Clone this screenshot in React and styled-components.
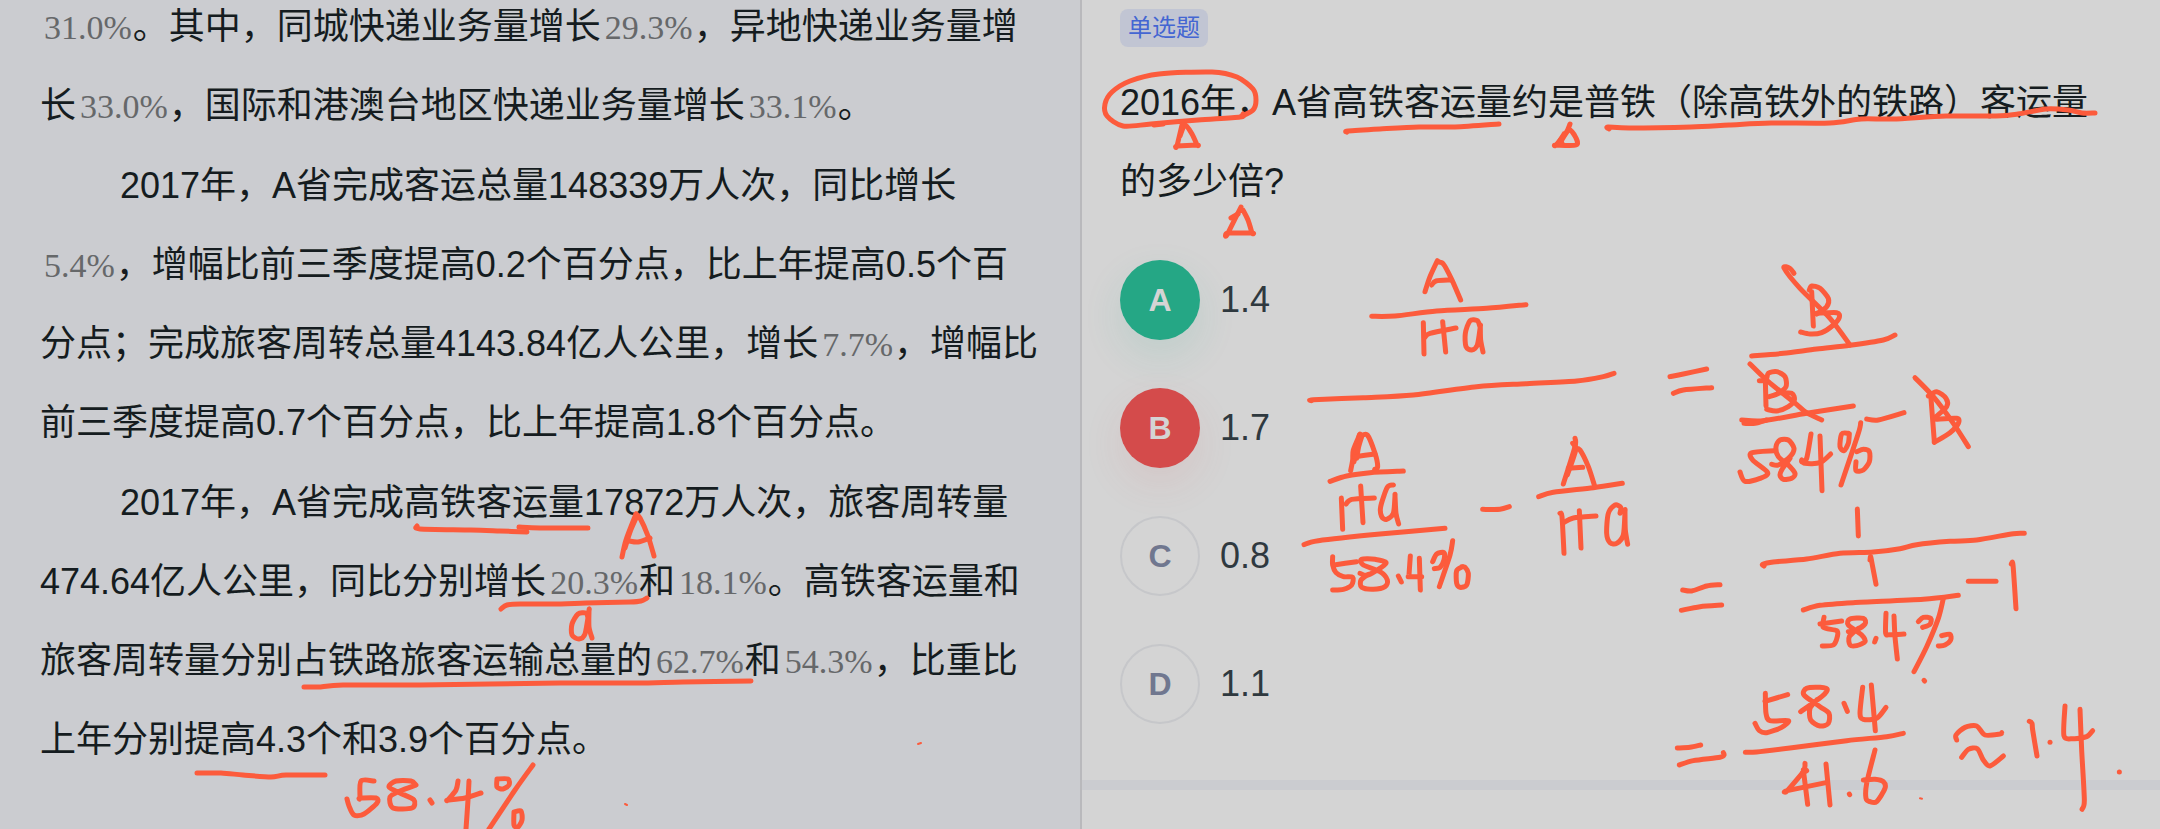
import React from 'react';
import styled, { createGlobalStyle, css } from 'styled-components';

const GlobalStyle = createGlobalStyle`
  *, *::before, *::after { box-sizing: border-box; }
  body {
    margin: 0;
    background: #cbccd0;
    color: #151c20;
    font-family: "Liberation Sans", "Noto Sans CJK SC", sans-serif;
  }
`;

const Page = styled.div`
  display: grid;
  grid-template-columns: 1fr 1fr;
  min-height: 100vh;
  overflow: hidden;
`;

const Passage = styled.article`
  position: relative;
  display: flex;
  flex-direction: column;
  gap: 1px;
  padding: 0 40px 36px;
  overflow: hidden;
  background: #cbccd0;
`;

const bodyText = css`
  margin: 0;
  font-size: 36px;
  line-height: 79px;
`;

const Paragraph = styled.p`
  ${bodyText}
  text-indent: ${({ $continued }) => ($continued ? '0' : '80px')};
  margin-top: ${({ $continued }) => ($continued ? '-13px' : '0')};
`;

const Formula = styled.span`
  padding: 0 1px 0 4px;
  font-family: "Liberation Serif", serif;
  font-size: 34px;
  line-height: 36px;
  color: #66686a;
`;

const Panel = styled.main`
  position: relative;
  overflow: hidden;
  background: #d4d4d4;
  border-left: 2px solid #b9b9bc;
`;

const Question = styled.section`
  padding: 9px 38px 56px;
  border-bottom: 10px solid #cbccd0;
`;

const Tag = styled.span`
  display: inline-block;
  padding: 0 8px;
  border-radius: 8px;
  background: #c1c5d3;
  color: #4466d2;
  font-size: 24px;
  line-height: 38px;
`;

const Stem = styled.h1`
  ${bodyText}
  margin-top: 16px;
  font-weight: 400;
`;

const Options = styled.fieldset`
  display: flex;
  flex-direction: column;
  gap: 48px;
  margin: 39px 0 0;
  padding: 0;
  border: 0;
`;

const Option = styled.label`
  display: flex;
  align-items: center;
  gap: 20px;
  color: #2f393f;
  font-size: 36px;
  line-height: 80px;
  cursor: pointer;
`;

const HiddenRadio = styled.input`
  position: absolute;
  width: 1px;
  height: 1px;
  margin: 0;
  opacity: 0;
`;

const marks = {
  right: css`
    background: #25a785;
    color: #d4d4d4;
    box-shadow: 0 16px 40px rgba(37, 167, 133, 0.12);
  `,
  wrong: css`
    background: #d44b4b;
    color: #d4d4d4;
    box-shadow: 0 16px 40px rgba(212, 75, 75, 0.1);
  `,
  plain: css`
    border: 2px solid #c6c7ca;
    color: #70778f;
  `,
};

const Letter = styled.span`
  display: flex;
  align-items: center;
  justify-content: center;
  width: 80px;
  height: 80px;
  border-radius: 50%;
  font-size: 32px;
  font-weight: 700;
  line-height: 36px;
  ${({ $mark }) => marks[$mark]}
`;

const Value = styled.span`
  line-height: 80px;
`;

const Ink = styled.svg`
  position: absolute;
  top: 0;
  left: ${({ $left }) => $left}px;
  width: 1080px;
  height: 829px;
  pointer-events: none;
  fill: none;
  stroke: #fc5b3c;
  stroke-linecap: round;
  stroke-linejoin: round;
`;

/* Turns a list of pen positions into a smooth curve through all of them. */
function curve(text) {
  const p = text.split(' ').map((pair) => pair.split(',').map(Number));
  let d = `M${p[0]}`;
  if (p.length === 1) return `${d}l0.1,0`;
  for (let i = 0; i < p.length - 1; i += 1) {
    const a = p[i - 1] || p[i];
    const b = p[i];
    const c = p[i + 1];
    const e = p[i + 2] || c;
    const k = 7;
    d += `C${b[0] + (c[0] - a[0]) / k},${b[1] + (c[1] - a[1]) / k} `;
    d += `${c[0] - (e[0] - b[0]) / k},${c[1] - (e[1] - b[1]) / k} ${c}`;
  }
  return d;
}

function Strokes({ x = 0, y = 0, scale = 1, width = 5, lines }) {
  return (
    <g transform={`translate(${x} ${y}) scale(${scale})`} strokeWidth={width / scale}>
      {lines.map((line) => (
        <path key={line} d={curve(line)} />
      ))}
    </g>
  );
}

const passageInk = [
  '417,526 420,529 471,530 500,531 527,532',
  '519,527 540,528 588,528',
  '622,557 626,540 636,514', '625,548 630,532 637,516',
  '636,514 640,518 648,536 654,556',
  '629,541 638,542 650,538',
  '501,609 507,605 520,604 561,604 586,603 630,602 641,601 647,598',
  '588,618 586,613 578,614 572,624 572,635 579,639 585,634 589,611 589,611 589,627 592,638',
  '304,687 318,687 343,685 420,685 560,683 636,683 683,682 751,681',
  '197,773 221,773 243,775 271,777 286,775 325,775',
  '374,781 361,781 360,798 360,798 376,798 377,803 364,814 354,815 349,806 347,799',
  '416,785 411,781 396,781 389,787 400,793 414,800 412,808 393,808 390,797 400,791 416,785',
  '430,800 432,803',
  '458,781 456,790 448,800 448,800 465,798 481,793', '469,781 468,800 466,829',
  '497,779 508,779 509,785 503,789 497,787 497,779', '533,765 515,790 489,829',
  '514,812 521,811 522,820 518,827 514,825 514,812',
];

const questionInk = [
  '1243,114 1240,117 1198,120 1151,124 1123,126 1107,116 1105,104 1112,92 1130,81 1159,74 1212,72 1237,77 1253,89 1256,100 1253,110 1240,117',
  '1154,125 1163,124',
  '1182,125 1177,146 1177,146 1197,145 1197,145 1192,134 1185,125 1180,136',
  '1347,132 1348,131 1380,129 1419,127 1455,127 1499,124',
  '1570,124 1566,133 1556,145 1556,145 1576,145 1576,138 1569,130 1560,143',
  '1564,134 1558,144 1562,143',
  '1609,129 1608,127 1629,128 1691,127 1729,125 1771,123 1830,123 1861,119 1893,119 1946,116 1996,116 2018,114 2046,109 2068,110 2082,113 2095,113',
  '1241,207 1227,235 1228,233 1252,233 1252,233 1248,220 1243,210',
  '1231,218 1238,214',
];

const divisionInk = [
  '435,185 450,140 472,92', '472,96 490,102 515,148 542,210', '455,165 468,153 512,150',
  '275,259 345,258 470,243 620,235 738,224',
  '430,278 432,372', '435,322 450,310 528,294', '488,275 497,366',
  '600,290 592,272 570,272 556,310 558,350 575,360 592,345 601,290 601,290 602,330 609,366',
  '95,512 100,509 250,503 400,495 590,470 740,461 890,453 970,440 1002,430',
  '240,612 220,660 218,690 212,722', '238,615 228,665 222,695', '245,620 236,650 230,685',
  '240,620 262,615 285,670 293,710 284,718', '225,680 285,672',
  '150,754 200,738 270,728 370,723',
  '184,804 188,898', '198,822 215,808 283,804', '242,768 249,878',
  '340,765 322,772 302,830 305,860 320,868 340,850 345,798 345,798 348,850 356,882',
  '72,944 115,932 300,912 495,895',
  '158,980 158,1005 168,1028 190,1040 218,1042 215,1065 190,1078 158,1080', '162,1005 230,995',
  '240,1030 265,1035 318,1000 285,988 245,988 250,1005 300,1025 322,1050 315,1070 280,1078 245,1072 243,1050 265,1033',
  '355,1038 364,1056', '391,978 387,1035 387,1040 425,1040', '418,985 421,1080',
  '458,995 470,972 492,968 492,990 480,1012 463,1016', '518,932 510,975 478,1070',
  '548,1010 530,1022 530,1060 540,1072 560,1065 565,1030 555,1012 545,1010',
  '608,838 660,838 688,830',
  '885,625 885,650 850,762', '878,640 887,660 862,735', '885,655 900,660 925,710 943,765', '865,715 908,712',
  '776,800 820,787 940,773 1027,760',
  '840,850 846,860 852,970', '850,878 880,864 948,858', '898,842 903,954',
  '1020,850 1022,832 1005,825 985,850 980,910 990,938 1010,940 1030,915 1035,845 1035,845 1036,900 1043,943',
];

const ratioInk = [
  '462,130 450,115 432,114 480,175 570,265 630,345',
  '515,185 520,288', '508,180 515,168 540,175 565,205 560,230 530,252',
  '530,250 590,248 598,262 580,285 545,308 510,312 482,306',
  '335,378 430,370 530,357 630,346 730,330 765,315',
  '90,440 130,432 200,417', '100,490 130,480 215,473',
  '330,402 385,455 460,515 500,548 545,570', '376,450 378,528',
  '358,452 378,450 385,430 410,425 435,440 438,470 415,490 388,500',
  '415,488 455,490 463,510 445,530 410,543 380,538',
  '305,570 370,572 500,550 640,528', '312,580 345,580 380,570',
  '402,662 335,668 338,690 383,728 360,745 315,754 300,726',
  '395,703 415,705 450,680 462,655 445,630 420,630 408,650 415,680 445,705 465,730 455,745 430,748 420,735 428,715 450,685',
  '513,612 500,685 485,695', '485,690 495,700 540,698 572,672', '540,618 546,782',
  '625,610 605,612 600,650 612,662 625,640 628,612', '662,578 655,610 603,765',
  '650,665 670,658 688,665 688,695 670,720 648,722 648,695',
  '680,567 715,570 792,548',
  '825,443 880,500 940,580 985,650', '872,492 883,635',
  '865,498 890,485 918,505 920,530 888,560', '888,568 950,565 955,580 930,608 883,637',
];

const resultInk = [
  '652,57 655,138',
  '372,228 368,223 400,216 500,207 600,190 700,186 780,176 830,164 930,154 1010,150 1120,131 1153,130',
  '690,210 692,200 697,225 708,283',
  '128,300 155,303 200,288 240,284', '124,361 180,350 245,345',
  '490,360 540,346 640,338 850,328 955,316',
  '985,274 1068,274', '1114,222 1119,225 1128,356',
  '540,402 605,393', '552,382 550,412 590,422 592,440 580,465 547,468',
  '625,425 645,422 675,402 670,385 630,387 625,405 665,435 675,455 650,467 630,465 628,440 655,415',
  '708,445 704,456', '738,370 737,430 750,434 792,432', '762,378 765,440 772,507',
  '835,395 850,382 872,385 870,403 848,412', '910,325 895,385 860,470 822,545',
  '905,437 930,433 932,450 915,465 895,468', '852,571 854,573',
  '443,614 375,634', '376,610 378,670 390,692 445,692 425,712 380,728 358,722 345,700',
  '482,665 545,620 562,598 540,592 500,595 492,615 540,650 567,670 565,700 540,708 512,690 510,655 530,630',
  '612,640 622,664', '668,592 660,670 670,688 710,685 738,652', '694,585 706,722',
  '316,787 350,786 450,774 620,752 740,740 790,730',
  '112,774 150,772 182,765', '118,825 160,812 240,802 252,795 250,788',
  '495,820 490,845 442,902 442,902 558,878', '490,840 503,943', '500,842 488,848', '558,822 570,945', '628,912 629,914',
  '705,780 680,880 678,925 690,935 710,935 735,895 730,875 705,868 670,870',
  '950,750 948,735 975,712 1010,708 1035,735 1080,732 1085,728',
  '965,802 985,778 1012,776 1030,810 1050,828 1090,798',
  '1168,694 1176,700 1178,720 1191,798', '1230,757',
  '1275,648 1272,738 1300,746 1340,740 1358,722', '1320,658 1325,780 1333,930 1326,958',
  '1438,846',
];

const options = [
  { letter: 'A', value: '1.4', mark: 'right' },
  { letter: 'B', value: '1.7', mark: 'wrong' },
  { letter: 'C', value: '0.8', mark: 'plain' },
  { letter: 'D', value: '1.1', mark: 'plain' },
];

export default function App() {
  return (
    <Page lang="zh-CN">
      <GlobalStyle />
      <Passage>
        <Paragraph $continued>
          <Formula>31.0%</Formula>。其中，同城快递业务量增长<Formula>29.3%</Formula>，异地快递业务量增长
          <Formula>33.0%</Formula>，国际和港澳台地区快递业务量增长<Formula>33.1%</Formula>。
        </Paragraph>
        <Paragraph>
          2017年，A省完成客运总量148339万人次，同比增长<Formula>5.4%</Formula>
          ，增幅比前三季度提高0.2个百分点，比上年提高0.5个百分点；完成旅客周转总量4143.84亿人公里，增长
          <Formula>7.7%</Formula>，增幅比前三季度提高0.7个百分点，比上年提高1.8个百分点。
        </Paragraph>
        <Paragraph>
          2017年，A省完成高铁客运量17872万人次，旅客周转量474.64亿人公里，同比分别增长
          <Formula>20.3%</Formula>和<Formula>18.1%</Formula>
          。高铁客运量和旅客周转量分别占铁路旅客运输总量的<Formula>62.7%</Formula>和
          <Formula>54.3%</Formula>，比重比上年分别提高4.3个和3.9个百分点。
        </Paragraph>
        <Ink $left={0} viewBox="0 0 1080 829" aria-hidden="true">
          <Strokes lines={passageInk} />
          <Strokes width={2} lines={['918,744 921,743', '625,804 627,805']} />
        </Ink>
      </Passage>
      <Panel>
        <Question>
          <Tag>单选题</Tag>
          <Stem>2016年，A省高铁客运量约是普铁（除高铁外的铁路）客运量的多少倍?</Stem>
          <Options aria-label="选项">
            {options.map(({ letter, value, mark }) => (
              <Option key={letter}>
                <HiddenRadio type="radio" name="answer" value={letter} defaultChecked={mark === 'wrong'} />
                <Letter $mark={mark}>{letter}</Letter>
                <Value>{value}</Value>
              </Option>
            ))}
          </Options>
        </Question>
        <Ink $left={-2} viewBox="1080 0 1080 829" aria-hidden="true">
          <Strokes lines={questionInk} />
          <Strokes x={1280} y={230} scale={1 / 3} lines={divisionInk} />
          <Strokes x={1640} y={230} scale={1 / 3} lines={ratioInk} />
          <Strokes x={1640} y={490} scale={1 / 3} lines={resultInk} />
          <Strokes x={1640} y={490} scale={1 / 3} width={2} lines={['840,925 846,926']} />
        </Ink>
      </Panel>
    </Page>
  );
}
